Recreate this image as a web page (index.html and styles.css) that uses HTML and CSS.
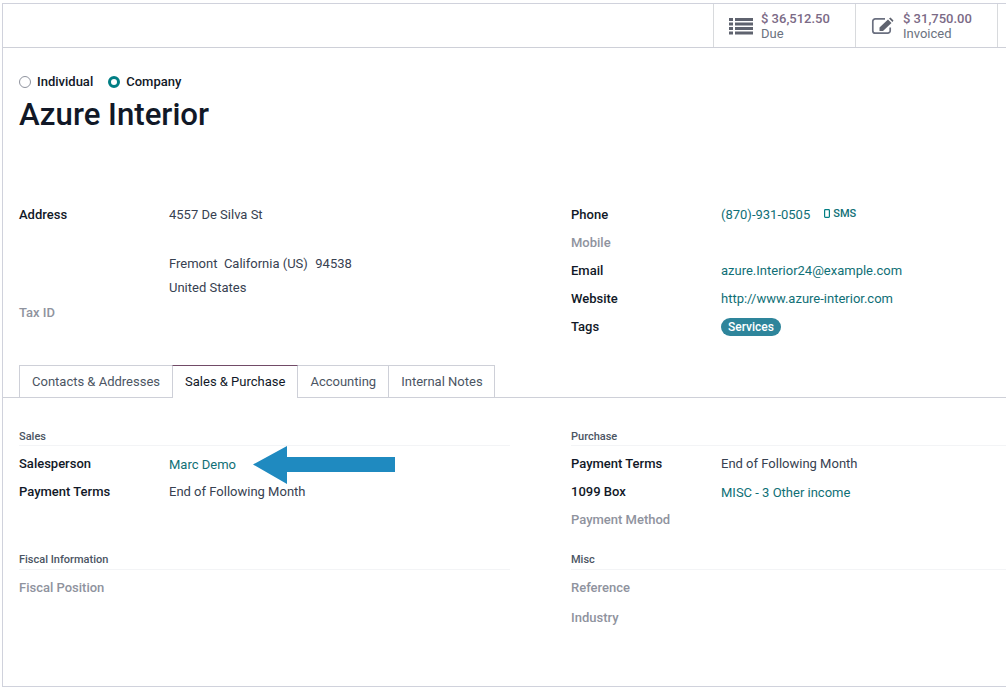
FILE: index.html
```html
<!DOCTYPE html>
<html lang="en">
<head>
<meta charset="utf-8">
<title>Azure Interior</title>
<link rel="stylesheet" href="styles.css">
</head>
<body>
<div class="frame">
  <div class="statbar">
    <div class="stat">
      <svg class="stat-icon" width="24" height="18" viewBox="0 0 24 18"><path d="M0 1h4v3H0zM6 1h18v3H6zM0 5.500h4v3H0zM6 5.500h18v3H6zM0 10h4v3H0zM6 10h18v3H6zM0 14.500h4v3H0zM6 14.500h18v3H6z" fill="#5f636f"/></svg>
      <div class="stat-text"><span class="stat-value">$ 36,512.50</span><span class="stat-label">Due</span></div>
    </div>
    <div class="stat stat-second">
      <svg class="stat-icon" width="23" height="18" viewBox="0 0 23 18"><path d="M19.200 10.500v3.200a2.500 2.500 0 0 1-2.500 2.500H4.300a2.500 2.500 0 0 1-2.500-2.500V4.300a2.500 2.500 0 0 1 2.500-2.500H14" fill="none" stroke="#6b7080" stroke-width="1.700"/><path d="M8.500 10.500 17 2.500 20.500 6 12 14H8.500zM18 1.500 19.500.5 22.500 3.500 21.500 5z" fill="#5f636f"/></svg>
      <div class="stat-text"><span class="stat-value">$ 31,750.00</span><span class="stat-label">Invoiced</span></div>
    </div>
    <div class="stat-end"></div>
  </div>

  <div class="sheet">
    <div class="radios">
      <span class="radio"><span class="dot"></span>Individual</span>
      <span class="radio"><span class="dot dot-on"></span>Company</span>
    </div>
    <h1 class="title">Azure Interior</h1>

    <div class="columns info">
      <div class="col">
        <div class="row"><span class="lbl">Address</span><span class="val">4557 De Silva St</span></div>
        <div class="addr-gap"></div>
        <div class="row addr-line"><span class="lbl"></span><span class="val">Fremont&nbsp; California (US)&nbsp; <span class="zip">94538</span></span></div>
        <div class="row addr-line"><span class="lbl"></span><span class="val">United States</span></div>
        <div class="row addr-line"><span class="lbl muted">Tax ID</span></div>
      </div>
      <div class="col col-right">
        <div class="row"><span class="lbl">Phone</span><span class="val link">(870)-931-0505<span class="sms"><svg width="6" height="9" viewBox="0 0 6 9"><rect x=".6" y=".6" width="4.800" height="7.800" rx=".8" fill="none" stroke="#017e84" stroke-width="1.200"/></svg>SMS</span></span></div>
        <div class="row"><span class="lbl muted">Mobile</span></div>
        <div class="row"><span class="lbl">Email</span><span class="val link">azure.Interior24@example.com</span></div>
        <div class="row"><span class="lbl">Website</span><span class="val link">http://www.azure-interior.com</span></div>
        <div class="row"><span class="lbl">Tags</span><span class="val"><span class="tag">Services</span></span></div>
      </div>
    </div>
  </div>

  <div class="tabs">
    <span class="tab">Contacts &amp; Addresses</span>
    <span class="tab tab-active">Sales &amp; Purchase</span>
    <span class="tab">Accounting</span>
    <span class="tab tab-last">Internal Notes</span>
  </div>

  <div class="columns panel">
    <div class="col">
      <div class="group-title">Sales</div>
      <div class="row"><span class="lbl">Salesperson</span><span class="val link">Marc Demo</span></div>
      <div class="row"><span class="lbl">Payment Terms</span><span class="val">End of Following Month</span></div>
      <div class="group-title group-second">Fiscal Information</div>
      <div class="row"><span class="lbl muted">Fiscal Position</span></div>
    </div>
    <div class="col col-right">
      <div class="group-title">Purchase</div>
      <div class="row"><span class="lbl">Payment Terms</span><span class="val">End of Following Month</span></div>
      <div class="row"><span class="lbl">1099 Box</span><span class="val link">MISC - 3 Other income</span></div>
      <div class="row"><span class="lbl muted">Payment Method</span></div>
      <div class="group-title group-misc">Misc</div>
      <div class="row"><span class="lbl muted">Reference</span></div>
      <div class="row row-tall"><span class="lbl muted">Industry</span></div>
    </div>
  </div>

  <svg class="arrow" width="142" height="38" viewBox="0 0 142 38"><path d="M0 18.500 34 0V11H142V26H34V38Z" fill="#1f8ac0"/></svg>
</div>
</body>
</html>
```
FILE: styles.css
```css
* { box-sizing: border-box; }
html, body { margin: 0; padding: 0; background: #fff; }
body {
  width: 1006px;
  height: 687px;
  overflow: hidden;
  font-family: Roboto, sans-serif;
  font-size: 13px;
  color: #374151;
}
.frame {
  position: relative;
  margin: 3px 0 0 2px;
  height: 684px;
  border: 1px solid #d0d2dc;
  border-right: 0;
}
.statbar {
  display: flex;
  justify-content: flex-end;
  height: 44px;
  border-bottom: 1px solid #ced0d8;
  padding-right: 8px;
}
.stat {
  width: 142px;
  display: flex;
  align-items: center;
  gap: 8px;
  padding-left: 15px;
  border-left: 1px solid #d8dadd;
}
.stat-second { gap: 9px; }
.stat-end { width: 1px; background: #d8dadd; }
.stat-icon { flex: none; }
.stat-text { display: flex; flex-direction: column; line-height: 15px; }
.stat-value { font-weight: 500; color: #7b6a86; }
.stat-label { color: #6b7280; }
.sheet { padding: 0 0 0 16px; }
.radios { display: flex; gap: 15px; padding-top: 26px; height: 41px; }
.radio { display: flex; align-items: center; gap: 6px; height: 15px; font-weight: 500; color: #111827; }
.dot { width: 12px; height: 12px; border-radius: 50%; border: 1px solid #8f939e; background: #fff; }
.dot-on { border: 3.500px solid #017e84; }
.title {
  margin: 0;
  height: 111px;
  padding-top: 8px;
  font-size: 31.200px;
  line-height: 36px;
  font-weight: 500;
  color: #111827;
}
.columns { display: flex; }
.info { height: 165px; }
.col { width: 552px; padding-right: 61px; }
.col-right { width: 435px; padding-right: 0; }
.row { display: flex; height: 28px; align-items: center; }
.lbl { width: 150px; flex: none; font-weight: 500; color: #111827; }
.lbl.muted { color: #8f939e; }
.val { color: #374151; }
.val.link { color: #0f6f76; }
.panel .val.link { padding-top: 2px; }
.zip { margin-left: 1px; }
.addr-gap { height: 23px; }
.addr-line { height: 24.500px; }
.sms { display: inline-flex; align-items: center; gap: 3px; margin-left: 14px; font-size: 11px; font-weight: 500; position: relative; top: -1px; }
.tag {
  display: inline-block;
  height: 18px;
  line-height: 18px;
  margin-top: 2px;
  padding: 0 7px;
  border-radius: 9px;
  background: #2e859b;
  color: #fff;
  font-size: 12px;
  font-weight: 500;
}
.tabs {
  display: flex;
  height: 33px;
  padding-left: 16px;
  border-bottom: 1px solid #ced0d8;
}
.tab {
  height: 32px;
  padding: 0 12px;
  line-height: 31px;
  border: 1px solid #ced0d8;
  border-bottom: 0;
  margin-right: -1px;
  color: #4b5563;
  white-space: nowrap;
}
.tab-last { padding-right: 11.500px; }
.tab-active {
  height: 33px;
  position: relative;
  z-index: 1;
  background: #fff;
  color: #111827;
  border-top-color: #714b67;
}
.panel { padding: 32px 0 0 16px; }
.group-title {
  height: 16px;
  line-height: 14px;
  font-size: 11px;
  font-weight: 500;
  color: #4b5563;
  border-bottom: 1px solid #f3f4f6;
  margin-bottom: 3px;
}
.group-second { height: 17px; margin-top: 48px; }
.group-misc { height: 17px; margin-top: 20px; }
.row-tall { height: 32px; }
.arrow { position: absolute; left: 250px; top: 442px; }
```
